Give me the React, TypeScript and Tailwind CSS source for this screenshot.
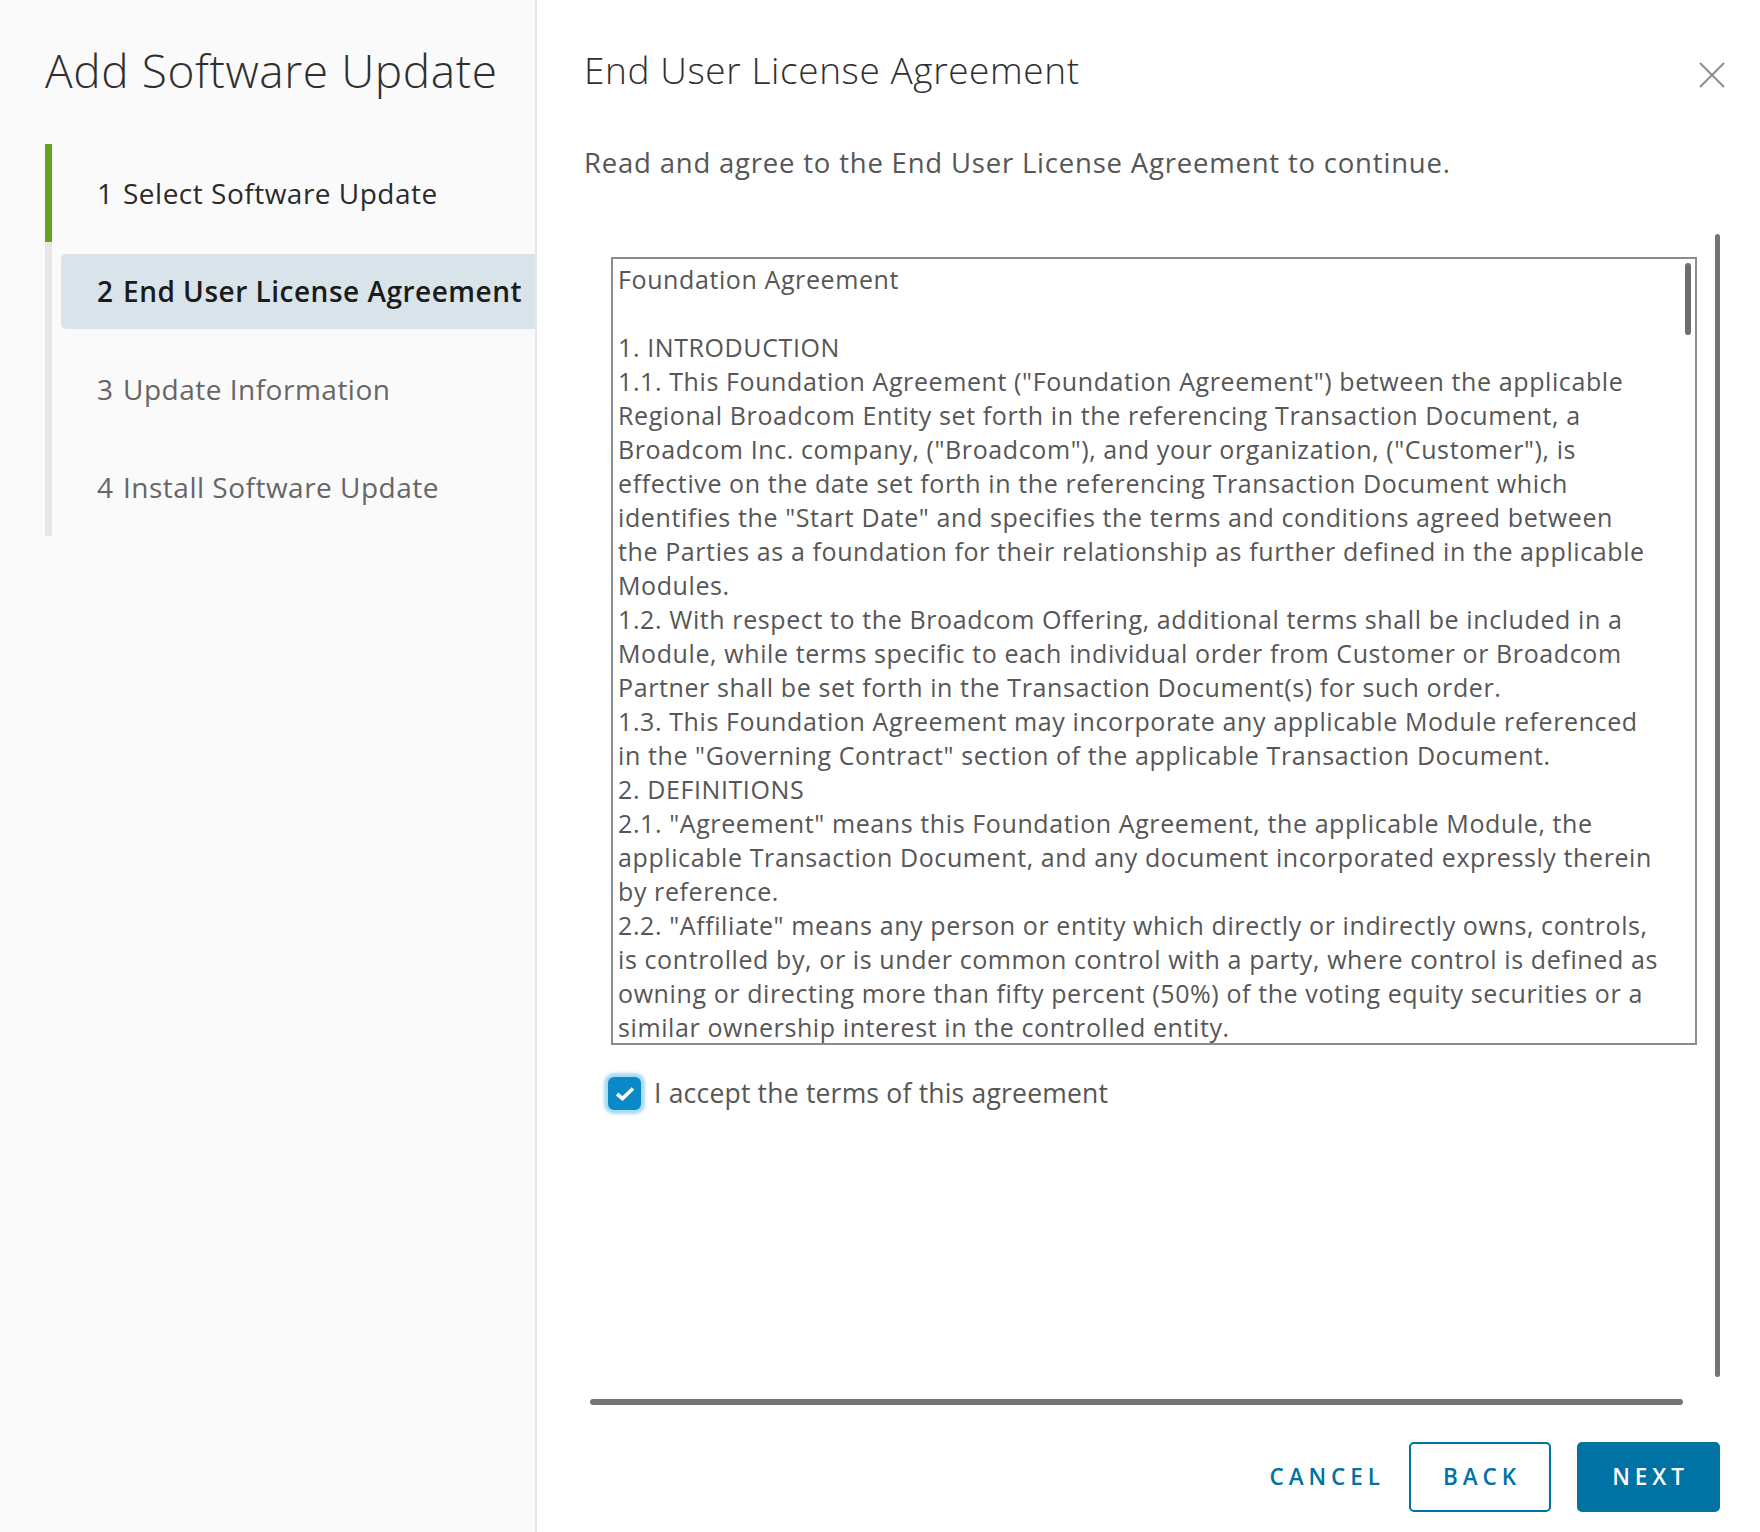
const steps = [
  { n: '1', label: 'Select Software Update', state: 'done' },
  { n: '2', label: 'End User License Agreement', state: 'current' },
  { n: '3', label: 'Update Information', state: 'todo' },
  { n: '4', label: 'Install Software Update', state: 'todo' },
]

const eulaLines = [
  'Foundation Agreement',
  '',
  '1. INTRODUCTION',
  '1.1. This Foundation Agreement ("Foundation Agreement") between the applicable',
  'Regional Broadcom Entity set forth in the referencing Transaction Document, a',
  'Broadcom Inc. company, ("Broadcom"), and your organization, ("Customer"), is',
  'effective on the date set forth in the referencing Transaction Document which',
  'identifies the "Start Date" and specifies the terms and conditions agreed between',
  'the Parties as a foundation for their relationship as further defined in the applicable',
  'Modules.',
  '1.2. With respect to the Broadcom Offering, additional terms shall be included in a',
  'Module, while terms specific to each individual order from Customer or Broadcom',
  'Partner shall be set forth in the Transaction Document(s) for such order.',
  '1.3. This Foundation Agreement may incorporate any applicable Module referenced',
  'in the "Governing Contract" section of the applicable Transaction Document.',
  '2. DEFINITIONS',
  '2.1. "Agreement" means this Foundation Agreement, the applicable Module, the',
  'applicable Transaction Document, and any document incorporated expressly therein',
  'by reference.',
  '2.2. "Affiliate" means any person or entity which directly or indirectly owns, controls,',
  'is controlled by, or is under common control with a party, where control is defined as',
  'owning or directing more than fifty percent (50%) of the voting equity securities or a',
  'similar ownership interest in the controlled entity.',
]

function StepRow({ n, label, state }: { n: string; label: string; state: string }) {
  const isCurrent = state === 'current'
  return (
    <div
      className={
        'flex h-[98px] items-center border-l-[7px] pl-[9px] ' +
        (state === 'done' ? 'border-[#62a420]' : 'border-[#e8e8e8]')
      }
    >
      <div
        className={
          'flex h-[75px] flex-1 items-center whitespace-nowrap rounded-l-[5px] pl-[36px] text-[28px] tracking-[0.5px] ' +
          (isCurrent
            ? 'bg-[#d9e4ea] font-semibold text-[#1b1b1b]'
            : state === 'done'
              ? 'text-[#2b2b2b]'
              : 'text-[#666666]')
        }
      >
        <span className="w-[26px] shrink-0">{n}</span>
        {label}
      </div>
    </div>
  )
}

function CloseIcon() {
  return (
    <svg width="26" height="26" viewBox="0 0 26 26" fill="none" stroke="#8c8c8c" strokeWidth="2">
      <line x1="1" y1="1" x2="25" y2="25" />
      <line x1="25" y1="1" x2="1" y2="25" />
    </svg>
  )
}

export default function App() {
  return (
    <div className="flex h-[1532px] w-[1760px] overflow-hidden bg-white font-['Open_Sans',sans-serif]">
      {/* wizard steps */}
      <aside className="w-[537px] shrink-0 border-r-2 border-[#e6e6e6] bg-[#fafafa]">
        <h1 className="pl-[45px] pt-[41px] text-[46px] leading-[58px] tracking-[0.6px] font-light text-[#2f2f2f]">
          Add Software Update
        </h1>
        <nav className="ml-[45px] mt-[45px] flex flex-col">
          {steps.map((s) => (
            <StepRow key={s.n} {...s} />
          ))}
        </nav>
      </aside>

      <main className="flex flex-1 flex-col pl-[47px] pr-[40px]">
        <div className="flex items-start justify-between pt-[46px]">
          <h2 className="text-[37px] leading-[48px] tracking-[0.6px] font-light text-[#2f2f2f]">
            End User License Agreement
          </h2>
          <button className="mr-[-5px] mt-[16px]">
            <CloseIcon />
          </button>
        </div>
        <p className="mt-[51px] text-[27.5px] leading-[36px] tracking-[0.8px] text-[#565656]">
          Read and agree to the End User License Agreement to continue.
        </p>

        <div className="mt-[53px] flex h-[1143px]">
          <div className="flex flex-1 flex-col">
            <div className="ml-[27px] mt-[23px] flex h-[788px] w-[1086px] overflow-hidden border-2 border-[#8c8c8c] bg-white">
              <div className="flex-1 overflow-hidden pl-[5px] pt-[3px] text-[25px] leading-[34px] tracking-[0.6px] text-[#565656]">
                {eulaLines.map((line, i) => (
                  <div key={i} className="h-[34px] whitespace-nowrap">
                    {line}
                  </div>
                ))}
              </div>
              <div className="mr-[4px] mt-[4px] h-[72px] w-[6px] shrink-0 rounded-full bg-[#6e6e6e]" />
            </div>

            <label className="ml-[24px] mt-[29px] flex items-center gap-[13px] text-[26.5px] tracking-[0.2px] text-[#565656]">
              <span className="flex h-[33px] w-[33px] items-center justify-center rounded-[6px] bg-[#0a89c9] shadow-[0_0_3px_4px_rgba(110,195,235,0.6)]">
                <svg width="20" height="15" viewBox="0 0 20 15" fill="none" stroke="white" strokeWidth="3.6">
                  <path d="M2 8 L7.5 12.5 L18 2.5" />
                </svg>
              </span>
              I accept the terms of this agreement
            </label>
          </div>
          <div className="w-[5px] rounded-full bg-[#747474]" />
        </div>

        <div className="ml-[6px] mt-[22px] h-[6px] w-[1093px] rounded-full bg-[#747474]" />

        <div className="mt-[37px] flex items-center justify-end">
          <button className="mr-[24px] h-[70px] text-[22.5px] font-semibold tracking-[0.22em] text-[#0072a3]">
            CANCEL
          </button>
          <button className="mr-[26px] h-[70px] w-[142px] rounded-[5px] border-2 border-[#0072a3] pl-[4px] text-[22.5px] font-semibold tracking-[0.22em] text-[#0072a3]">
            BACK
          </button>
          <button className="h-[70px] w-[143px] rounded-[5px] bg-[#0072a3] pl-[4px] text-[22.5px] font-semibold tracking-[0.22em] text-white">
            NEXT
          </button>
        </div>
      </main>
    </div>
  )
}
